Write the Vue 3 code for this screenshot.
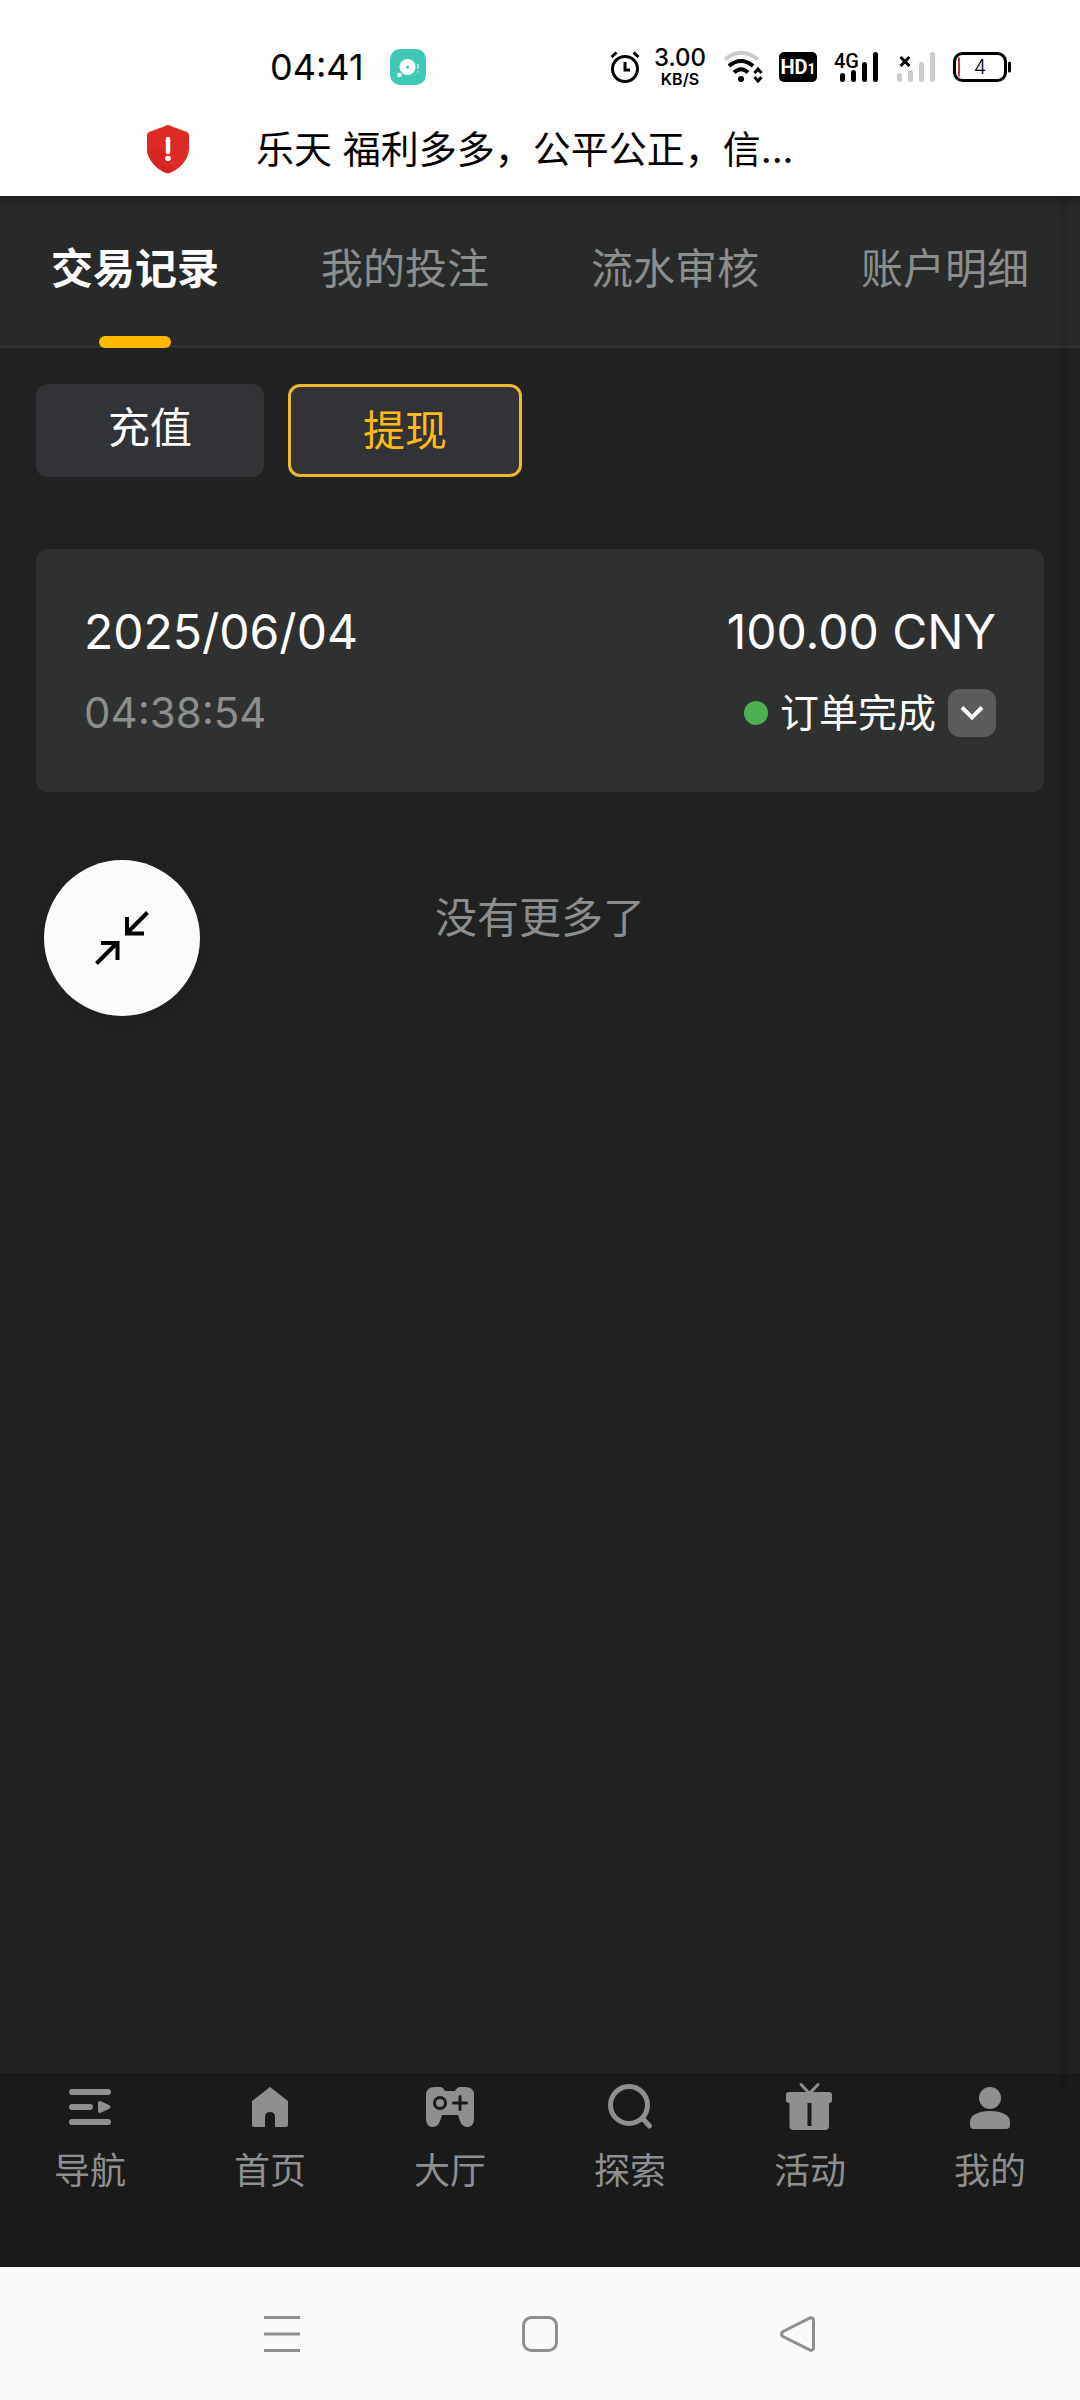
<script setup>
import { ref } from 'vue'

const tabs = ['交易记录', '我的投注', '流水审核', '账户明细']
const activeTab = ref(0)
const kinds = ['充值', '提现']
const activeKind = ref(1)
const records = [
  { date: '2025/06/04', time: '04:38:54', amount: '100.00 CNY', status: '订单完成' },
]
const navItems = [
  { id: 'menu', label: '导航' },
  { id: 'home', label: '首页' },
  { id: 'hall', label: '大厅' },
  { id: 'search', label: '探索' },
  { id: 'gift', label: '活动' },
  { id: 'user', label: '我的' },
]
</script>

<template>
  <div class="screen">
    <header class="top">
      <div class="status">
        <div class="status-left">
          <span class="clock">04:41</span>
          <svg width="36" height="36" viewBox="0 0 36 36" aria-hidden="true">
            <rect width="36" height="36" rx="10" fill="#40c8b6" />
            <circle cx="17.500" cy="18" r="8" fill="#fff" />
            <circle cx="17.500" cy="18" r="1.600" fill="#40c8b6" />
            <circle cx="9.500" cy="26" r="2.300" fill="#fff" />
            <path d="M28 15v5M28 22v1.500" stroke="#b9ece5" stroke-width="1.600" />
          </svg>
        </div>
        <div class="status-right">
          <svg class="alarm" width="30" height="32" viewBox="0 0 30 32" fill="none" stroke="#000" aria-hidden="true">
            <circle cx="15" cy="18" r="12.500" stroke-width="3" />
            <path d="M15 11v8h5" stroke-width="3" />
            <path d="M1.500 6l5-4.500M28.500 6l-5-4.500" stroke-width="3" />
          </svg>
          <span class="rate"><b>3.00</b><small>KB/S</small></span>
          <svg class="wifi" width="40" height="32" viewBox="0 0 40 32" fill="none" aria-hidden="true">
            <path d="M2 8.500Q18-5 35 8.500" stroke="#ccc" stroke-width="4" />
            <path d="M6 15Q18 5 30 15" stroke="#000" stroke-width="4" />
            <path d="M11 21.500Q18 15 25 21.500" stroke="#000" stroke-width="4" />
            <circle cx="18" cy="28" r="3" fill="#000" />
            <path d="M31.500 22l3.500-4 3.500 4M31.500 26l3.500 4 3.500-4" stroke="#000" stroke-width="3" />
          </svg>
          <span class="hd">HD<small>1</small></span>
          <svg class="signal" width="45" height="32" viewBox="0 0 45 32" stroke-width="5" stroke-linecap="round" aria-hidden="true">
            <text x="-1" y="17" class="net">4G</text>
            <path d="M7.500 24.500v4M18.500 21.500v7M29.500 13.500v15M40.500 3.500v25" stroke="#000" />
          </svg>
          <svg class="nosignal" width="38" height="32" viewBox="0 0 38 32" fill="none" stroke-linecap="round" aria-hidden="true">
            <path d="M2.500 24.500v4M13.500 21.500v7M24.500 13.500v15M35.500 3.500v25" stroke="#ccc" stroke-width="5" />
            <path d="M3.500 6l9 9M12.500 6l-9 9" stroke="#000" stroke-width="3" stroke-linecap="butt" />
          </svg>
          <svg class="battery" width="58" height="30" viewBox="0 0 58 30" fill="none" aria-hidden="true">
            <rect x="1.500" y="1.500" width="51" height="27" rx="8" stroke="#000" stroke-width="3" />
            <path d="M56.500 11v8" stroke="#000" stroke-width="3" stroke-linecap="round" />
            <path d="M6 5.500v19" stroke="#c8304c" stroke-width="2" />
            <text x="27" y="22" text-anchor="middle" class="level">4</text>
          </svg>
        </div>
      </div>
      <div class="titlebar">
        <svg width="44" height="50" viewBox="0 0 44 50" aria-hidden="true">
          <path d="M22 1q2 0 4 1.500l15 5.500q2 1 2 3v14c0 11-10 20-18 23.500q-3 1.500-6 0C11 45 1 36 1 25V11q0-2 2-3L18 2.500Q20 1 22 1z" fill="#dc2a24" />
          <path d="M1 25q5-2 9 0 4 3 7 0l9 22q-4 4-7 1.500C11 45 1 36 1 25z" fill="#c9201f" opacity=".5" />
          <path d="M22 15v13" stroke="#fff" stroke-width="4.500" stroke-linecap="round" />
          <circle cx="22" cy="34.500" r="2.800" fill="#fff" />
        </svg>
        <h1>乐天 福利多多，公平公正，信...</h1>
      </div>
    </header>

    <main class="page">
      <nav class="tabs">
        <button
          v-for="(tab, i) in tabs"
          :key="tab"
          type="button"
          class="tab"
          :class="{ active: i === activeTab }"
          @click="activeTab = i"
        >{{ tab }}</button>
      </nav>

      <div class="kinds">
        <button
          v-for="(kind, i) in kinds"
          :key="kind"
          type="button"
          class="kind"
          :class="{ active: i === activeKind }"
          @click="activeKind = i"
        >{{ kind }}</button>
      </div>

      <article v-for="r in records" :key="r.time" class="card">
        <div class="row main-row">
          <span>{{ r.date }}</span>
          <span>{{ r.amount }}</span>
        </div>
        <div class="row">
          <span class="time">{{ r.time }}</span>
          <span class="state">
            <i class="dot"></i>
            <span>{{ r.status }}</span>
            <button type="button" class="expand" aria-label="展开">
              <svg width="24" height="16" viewBox="0 0 24 16" fill="none" stroke="#fff" stroke-width="4" aria-hidden="true">
                <path d="M2 2.500l10 10 10-10" />
              </svg>
            </button>
          </span>
        </div>
      </article>

      <p class="end">没有更多了</p>

      <button type="button" class="float" aria-label="收起">
        <svg width="56" height="56" viewBox="0 0 56 56" fill="none" stroke="#000" stroke-width="4" aria-hidden="true">
          <path d="M53.500 2.500L33 23M33 7v16.500h17" />
          <path d="M2.500 53.500L23 33M7 33h16.500v17" />
        </svg>
      </button>
    </main>

    <nav class="bottom">
      <a v-for="item in navItems" :key="item.id" href="#" class="nav-item">
        <svg width="52" height="52" viewBox="0 0 52 52" fill="currentColor" aria-hidden="true">
          <g v-if="item.id === 'menu'">
            <path d="M8 13h36M8 28h18M8 43h36" stroke="currentColor" stroke-width="6" stroke-linecap="round" />
            <path d="M36 24l8.500 4-8.500 4z" stroke="currentColor" stroke-width="4" stroke-linejoin="round" />
          </g>
          <path v-else-if="item.id === 'home'" d="M26 8L44 22v24q0 2-2 2H31V38q0-5-5-5t-5 5v10H10q-2 0-2-2V22z" />
          <g v-else-if="item.id === 'hall'">
            <path d="M2 16Q2 8 11 8h5q3 0 5 4h10q2-4 5-4h5q9 0 9 8v24q0 7-6 8-6 0-8-6l-2-6H18l-2 6q-2 6-8 6-6-1-6-8z" />
            <circle cx="16" cy="24" r="5.500" fill="none" stroke="#1a1a1a" stroke-width="3" />
            <path d="M36 17.500v13M29.500 24h13" stroke="#1a1a1a" stroke-width="3" stroke-linecap="round" />
          </g>
          <g v-else-if="item.id === 'search'" fill="none" stroke="currentColor" stroke-width="5" stroke-linecap="round">
            <circle cx="25" cy="26" r="18.500" />
            <path d="M39 40l6.500 7" />
          </g>
          <g v-else-if="item.id === 'gift'">
            <path d="M17 5.500l8.500 9 8.500-9" fill="none" stroke="currentColor" stroke-width="3" stroke-linecap="round" />
            <path d="M5 13h40q3 0 3 3v5q0 3-3 3v23q0 4-4 4H9.500q-4 0-4-4V24Q2 24 2 21v-5q0-3 3-3z" />
            <path d="M25.500 24v23" stroke="#1a1a1a" stroke-width="4" />
          </g>
          <g v-else>
            <circle cx="26" cy="19" r="11" />
            <path d="M6 43c0-7 8-11 20-11s20 4 20 11v3q0 4-4 4H10q-4 0-4-4z" />
          </g>
        </svg>
        <span>{{ item.label }}</span>
      </a>
      <i class="scroll-track"></i>
    </nav>

    <footer class="system">
      <button type="button" aria-label="最近任务">
        <svg width="36" height="36" viewBox="0 0 36 36" stroke="#8f8f8f" stroke-width="3" aria-hidden="true">
          <path d="M0 1.500h36M0 18h36M0 34.500h36" />
        </svg>
      </button>
      <button type="button" aria-label="主屏幕">
        <svg width="36" height="36" viewBox="0 0 36 36" fill="none" stroke="#8f8f8f" stroke-width="3" aria-hidden="true">
          <rect x="1.500" y="1.500" width="33" height="33" rx="8" />
        </svg>
      </button>
      <button type="button" aria-label="返回">
        <svg width="36" height="36" viewBox="0 0 36 36" fill="none" stroke="#8f8f8f" stroke-width="3" aria-hidden="true">
          <path d="M3 15.500L30 2q3.500-1 3.500 2.500v27q0 3.500-3.500 2.500L3 20.500q-3-2.500 0-5z" />
        </svg>
      </button>
    </footer>
  </div>
</template>

<style>
body {
  background: #202221;
}
</style>

<style scoped>
.screen {
  display: flex;
  flex-direction: column;
  min-height: 100vh;
  overflow: hidden;
  font-family: Inter, "Noto Sans CJK SC", sans-serif;
  color: #fff;
}
.screen * {
  box-sizing: border-box;
}
button {
  margin: 0;
  padding: 0;
  border: 0;
  background: none;
  color: inherit;
  font: inherit;
}
svg {
  display: block;
  flex: none;
  overflow: visible;
}

.top {
  padding: 23px 0 9px;
  background: #fefefe;
  color: #000;
}
.status {
  display: flex;
  align-items: center;
  justify-content: space-between;
  height: 88px;
  padding: 0 69px 0 270px;
}
.status-left,
.status-right {
  display: flex;
  align-items: center;
}
.status-left {
  gap: 26px;
}
.clock {
  font-size: 36px;
  line-height: 40px;
}
.alarm {
  margin-right: 14px;
}
.rate {
  display: flex;
  flex-direction: column;
  align-items: center;
  width: 52px;
  margin-right: 17px;
}
.rate b {
  font-size: 24px;
  font-weight: 500;
  line-height: 24px;
}
.rate small {
  font-size: 16px;
  font-weight: 600;
  line-height: 18px;
}
.wifi {
  margin-right: 16px;
}
.hd {
  display: flex;
  align-items: baseline;
  justify-content: center;
  width: 38px;
  height: 30px;
  margin-right: 18px;
  border-radius: 5px;
  background: #000;
  color: #fff;
  font-family: Roboto, sans-serif;
  font-size: 20px;
  font-weight: 700;
  line-height: 30px;
}
.hd small {
  font-size: 14px;
}
.net {
  font-family: Roboto, sans-serif;
  font-size: 20px;
  font-weight: 500;
}
.level {
  fill: #000;
  font-size: 20px;
  font-weight: 300;
}
.signal {
  margin-right: 17px;
}
.nosignal {
  margin-right: 18px;
}
.titlebar {
  display: flex;
  align-items: center;
  gap: 66px;
  height: 76px;
  padding: 0 146px;
}
.titlebar h1 {
  margin: 0;
  font-size: 38px;
  font-weight: 400;
  line-height: 56px;
  white-space: nowrap;
}

.page {
  position: relative;
  flex: 1;
  background: #202221;
}
.tabs {
  display: flex;
  height: 152px;
  border-bottom: 3px solid #303131;
  background: linear-gradient(#202221, #282a29 16px);
}
.tab {
  position: relative;
  flex: 1;
  padding-bottom: 4px;
  color: #8c8d8d;
  font-size: 42px;
  line-height: 63px;
}
.tab.active {
  color: #fff;
  font-weight: 700;
}
.tab.active::after {
  content: "";
  position: absolute;
  bottom: -3px;
  left: calc(50% - 36px);
  width: 72px;
  height: 12px;
  border-radius: 6px;
  background: #ffba00;
}
.kinds {
  display: flex;
  gap: 24px;
  padding: 36px 36px 72px;
}
.kind {
  display: flex;
  align-items: flex-start;
  padding: 12px 72px;
  border-radius: 12px;
  background: #323337;
  font-size: 42px;
  line-height: 63px;
}
.kind.active {
  border: 3px solid #f0b82d;
  color: #ffba14;
}
.card {
  display: flex;
  flex-direction: column;
  gap: 9px;
  margin: 0 36px;
  padding: 47px 48px 43px;
  border-radius: 12px;
  background: #2f3130;
}
.row {
  display: flex;
  align-items: center;
  justify-content: space-between;
  height: 72px;
  font-size: 42px;
  line-height: 48px;
}
.main-row {
  font-size: 48px;
}
.time {
  color: #8c8d8d;
}
.state {
  display: flex;
  align-items: center;
  gap: 12px;
  font-size: 39px;
}
.dot {
  width: 24px;
  height: 24px;
  border-radius: 50%;
  background: #4caf50;
}
.expand {
  display: flex;
  align-items: center;
  justify-content: center;
  width: 48px;
  height: 48px;
  border-radius: 12px;
  background: #5b5b5b;
}
.end {
  margin: 94px 0 0;
  color: #8c8d8d;
  font-size: 42px;
  line-height: 63px;
  text-align: center;
}
.float {
  position: absolute;
  top: 664px;
  left: 44px;
  display: flex;
  align-items: center;
  justify-content: center;
  width: 156px;
  height: 156px;
  border-radius: 50%;
  background: #fbfbfb;
  box-shadow: 0 4px 16px rgba(0, 0, 0, 0.1);
}

.bottom {
  position: relative;
  display: flex;
  height: 194px;
  padding-top: 6px;
  background: #1a1a1a;
}
.nav-item {
  display: flex;
  flex: 1;
  flex-direction: column;
  align-items: center;
  gap: 13px;
  color: #8e8f90;
  font-size: 36px;
  line-height: 54px;
  text-decoration: none;
}
.scroll-track {
  position: absolute;
  right: 12px;
  bottom: 172px;
  width: 9px;
  height: 1899px;
  border-radius: 0 0 5px 5px;
  background: rgba(0, 0, 0, 0.07);
}
.system {
  display: flex;
  align-items: center;
  justify-content: center;
  gap: 222px;
  height: 133px;
  background: #fafafa;
}
</style>
